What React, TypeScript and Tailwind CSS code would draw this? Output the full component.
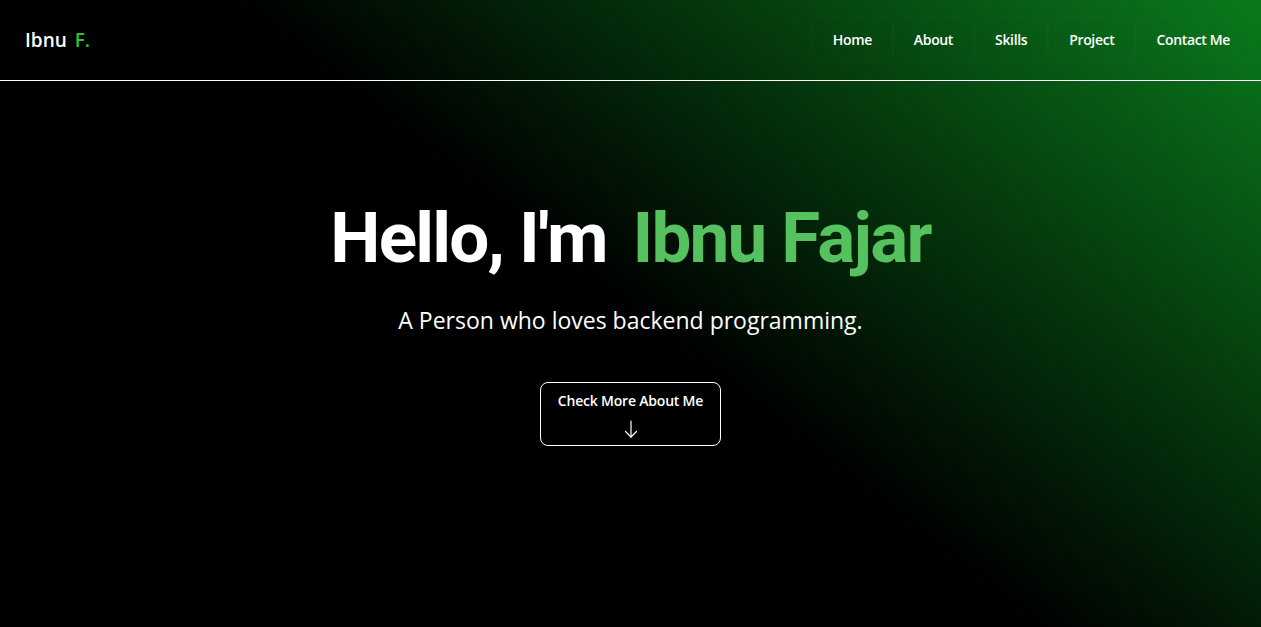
import React from 'react';

const links = ['Home', 'About', 'Skills', 'Project', 'Contact Me'];

const ArrowDown = () => (
  <svg viewBox="0 0 20 20" className="w-5 h-5 mt-[8px]" fill="none" stroke="currentColor" strokeWidth="1.2" strokeLinecap="round" strokeLinejoin="round">
    <path d="M10 2v16" />
    <path d="M4.5 12.5 10 18l5.5-5.5" />
  </svg>
);

export default function App() {
  return (
    <div className="min-h-screen w-full bg-[linear-gradient(38deg,#000_50%,#0a7a1c)] text-white font-['Open_Sans',sans-serif]">
      <header className="h-[81px] flex items-center justify-between border-b border-white pl-[25px] pr-[10px]">
        <div className="text-[19px] font-semibold">
          Ibnu <span className="ml-[3px] text-[#2fc42f]">F.</span>
        </div>
        <nav className="flex items-center">
          {links.map(link => (
            <a key={link} href="#" className="px-5 py-3 leading-5 text-[14px] font-semibold tracking-[-0.35px] rounded-lg border border-white/[0.02]">
              {link}
            </a>
          ))}
        </nav>
      </header>

      <main className="flex flex-col items-center pt-[121px]">
        <h1 className="font-['Roboto',sans-serif] text-[71px] leading-none font-bold tracking-[-1.8px]">
          Hello, I'm <span className="ml-[10px] text-[#56c25f]">Ibnu Fajar</span>
        </h1>
        <p className="mt-[31px] text-[23px] leading-8">A Person who loves backend programming.</p>
        <button className="mt-[46px] w-[181px] h-[64px] flex flex-col items-center pt-[8px] border border-white rounded-lg">
          <span className="text-[14px] leading-5 font-semibold tracking-[-0.2px]">Check More About Me</span>
          <ArrowDown />
        </button>
      </main>
    </div>
  );
}
